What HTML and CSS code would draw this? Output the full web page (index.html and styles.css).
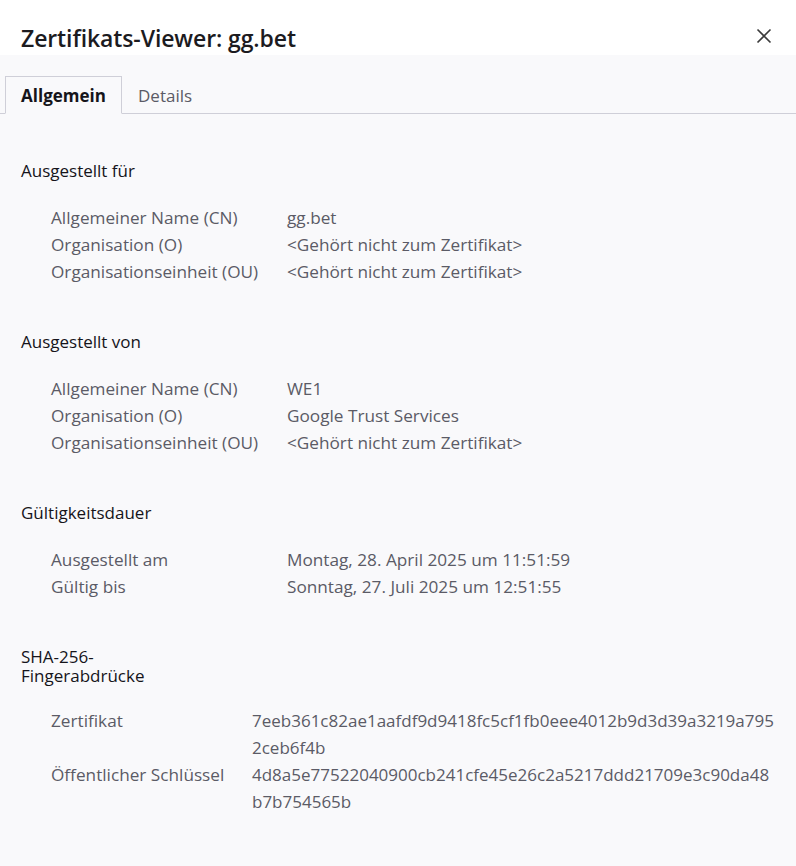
FILE: index.html
```html
<!DOCTYPE html>
<html lang="de">
<head>
<meta charset="utf-8">
<title>Zertifikats-Viewer: gg.bet</title>
<link rel="stylesheet" href="styles.css">
</head>
<body>
<div class="dialog">
  <header class="head">
    <h1 class="title">Zertifikats-Viewer: gg.bet</h1>
    <button class="close" aria-label="Schließen">
      <svg width="16" height="16" viewBox="0 0 16 16"><path d="M1.5 1.5 L14.5 14.5 M14.5 1.5 L1.5 14.5" stroke="#3b3b3b" stroke-width="1.6" fill="none"/></svg>
    </button>
  </header>
  <nav class="tabs">
    <div class="tab active">Allgemein</div>
    <div class="tab">Details</div>
  </nav>
  <main class="content">
    <section class="sec">
      <h2 class="sec-title">Ausgestellt für</h2>
      <div class="rows">
        <div class="label">Allgemeiner Name (CN)</div><div class="value">gg.bet</div>
        <div class="label">Organisation (O)</div><div class="value">&lt;Gehört nicht zum Zertifikat&gt;</div>
        <div class="label">Organisationseinheit (OU)</div><div class="value">&lt;Gehört nicht zum Zertifikat&gt;</div>
      </div>
    </section>
    <section class="sec">
      <h2 class="sec-title">Ausgestellt von</h2>
      <div class="rows">
        <div class="label">Allgemeiner Name (CN)</div><div class="value">WE1</div>
        <div class="label">Organisation (O)</div><div class="value">Google Trust Services</div>
        <div class="label">Organisationseinheit (OU)</div><div class="value">&lt;Gehört nicht zum Zertifikat&gt;</div>
      </div>
    </section>
    <section class="sec">
      <h2 class="sec-title">Gültigkeitsdauer</h2>
      <div class="rows">
        <div class="label">Ausgestellt am</div><div class="value">Montag, 28. April 2025 um 11:51:59</div>
        <div class="label">Gültig bis</div><div class="value">Sonntag, 27. Juli 2025 um 12:51:55</div>
      </div>
    </section>
    <section class="sec">
      <h2 class="sec-title narrow">SHA-256-Fingerabdrücke</h2>
      <div class="rows hash">
        <div class="label">Zertifikat</div><div class="value">7eeb361c82ae1aafdf9d9418fc5cf1fb0eee4012b9d3d39a3219a7952ceb6f4b</div>
        <div class="label">Öffentlicher Schlüssel</div><div class="value">4d8a5e77522040900cb241cfe45e26c2a5217ddd21709e3c90da48b7b754565b</div>
      </div>
    </section>
  </main>
</div>
</body>
</html>
```
FILE: styles.css
```css
html, body {
  margin: 0;
  padding: 0;
  background: #f9f9fb;
}
body {
  font-family: "Open Sans", "Noto Sans", sans-serif;
  color: #15141a;
  width: 796px;
  height: 866px;
  overflow: hidden;
}
.head {
  background: #ffffff;
  height: 55px;
  display: flex;
  align-items: center;
  justify-content: space-between;
  padding: 0 24px 0 21px;
  box-sizing: border-box;
}
.title {
  margin: 0;
  padding-top: 20px;
  font-size: 23px;
  font-weight: 600;
  color: #1c1b1f;
  letter-spacing: -0.1px;
}
.close {
  border: 0;
  background: transparent;
  padding: 0;
  margin-top: 16px;
  width: 16px;
  height: 16px;
  display: flex;
}
.tabs {
  display: flex;
  padding: 21px 0 0 5px;
  border-bottom: 1px solid #cfcfd8;
  height: 37px;
}
.tab {
  box-sizing: border-box;
  height: 38px;
  padding: 0 16px;
  display: flex;
  align-items: center;
  font-size: 17px;
  color: #5b5b66;
}
.tab.active {
  border: 1px solid #cfcfd8;
  border-bottom-color: #f9f9fb;
  color: #15141a;
  font-weight: 700;
  width: 117px;
  justify-content: center;
}
.content {
  padding: 47px 21px 0 21px;
}
.sec {
  margin-bottom: 47px;
}
.sec-title {
  margin: 0 0 23px 0;
  font-size: 17px;
  font-weight: 400;
  line-height: 20px;
  color: #15141a;
}
.sec-title.narrow {
  max-width: 150px;
  line-height: 19px;
  margin-bottom: 22px;
}
.rows {
  display: grid;
  grid-template-columns: 236px 1fr;
  padding-left: 30px;
  font-size: 17.2px;
  line-height: 27px;
  color: #5b5b66;
}
.rows.hash {
  grid-template-columns: 201px 527px;
}
.rows.hash .value {
  font-size: 17px;
  word-break: break-all;
}
```
